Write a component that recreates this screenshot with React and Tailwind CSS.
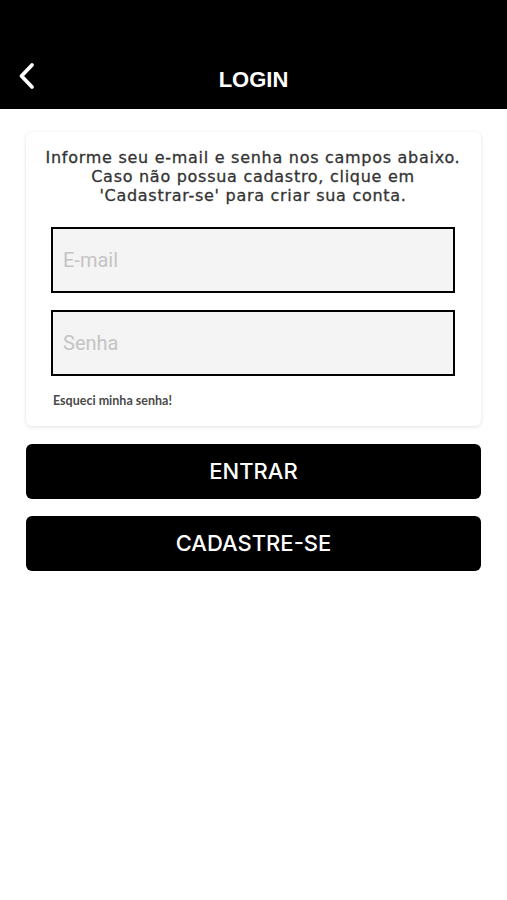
import React from 'react';

const inputCls = "h-[66px] w-full border-2 border-black bg-[#f4f4f4] px-[10px] font-['Roboto',_'Liberation_Sans',_sans-serif] text-[20px] text-black placeholder:text-[#c4c4c4] outline-none";
const btnCls = "h-[55px] w-full bg-black rounded-md text-white font-['Inter',_'Liberation_Sans',_sans-serif] font-medium text-[22px]";

const Login = () => {
    return (
        <div className="min-h-screen w-full bg-white">
            {/* Header */}
            <header className="w-full h-[109px] bg-black relative flex items-end justify-center pb-[15px]">
                <button className="absolute left-[13px] bottom-[15px] p-1">
                    <svg width="20" height="28" viewBox="0 0 20 28" fill="none">
                        <path d="M15 3 L4.5 14 L15 25" stroke="white" strokeWidth="3.8" strokeLinecap="round" strokeLinejoin="round" />
                    </svg>
                </button>
                <h1 className="text-white text-[22px] font-bold leading-[28px] font-['Liberation_Sans',_Arial,_sans-serif]">LOGIN</h1>
            </header>

            <main className="px-[26px] pt-[23px] flex flex-col">
                {/* Card */}
                <div className="bg-white rounded-md shadow-[0_1px_4px_rgba(0,0,0,0.12)] pl-[25px] pr-[26px] pt-[16px] pb-[17px] flex flex-col">
                    <p className="-mx-[14px] whitespace-nowrap text-center text-[#333] text-[16px] leading-[19px] tracking-[0.72px] font-['DejaVu_Sans',_sans-serif] [-webkit-text-stroke:0.3px_#333]">
                        Informe seu e-mail e senha nos campos abaixo.<br />
                        Caso não possua cadastro, clique em<br />
                        'Cadastrar-se' para criar sua conta.
                    </p>
                    <input type="email" placeholder="E-mail" className={`mt-[22px] ${inputCls}`} />
                    <input type="password" placeholder="Senha" className={`mt-[17px] ${inputCls}`} />
                    <a className="mt-[17px] ml-[2px] text-[12.5px] leading-[16px] font-bold text-[#4a4a4a] font-['Lato',_'Liberation_Sans',_sans-serif]">
                        Esqueci minha senha!
                    </a>
                </div>

                {/* Buttons */}
                <button className={`mt-[18px] ${btnCls}`}>ENTRAR</button>
                <button className={`mt-[17px] ${btnCls}`}>CADASTRE-SE</button>
            </main>
        </div>
    );
};

export default function App() {
    return <Login />;
}
